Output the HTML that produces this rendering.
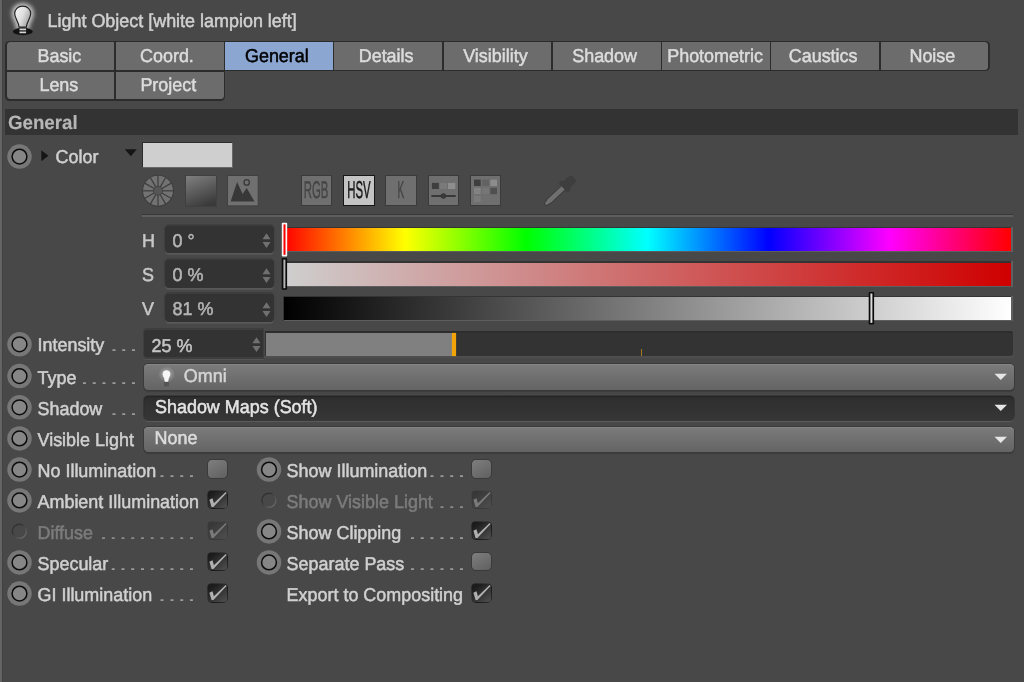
<!DOCTYPE html>
<html><head><meta charset="utf-8"><title>Light Object</title>
<style>
html,body{margin:0;padding:0;}
body{width:1024px;height:682px;overflow:hidden;background:#484848;position:relative;font-family:"Liberation Sans",sans-serif;color:#d0d0d0;text-rendering:geometricPrecision;}
.t{position:absolute;white-space:pre;-webkit-text-stroke:0.5px currentColor;}
.abs{position:absolute;}
.edge{left:0;top:0;width:1.8px;height:682px;background:#646464;box-shadow:0.9px 0 0 #424242;}
.hdr{left:5px;top:109px;width:1012.6px;height:26px;background:#333;}
.b{font-weight:bold;}
.radio{position:absolute;width:24.5px;height:24.5px;border-radius:50%;background:#777;}
.radio i{position:absolute;left:4.15px;top:4.15px;width:16.2px;height:16.2px;box-sizing:border-box;border:1.5px solid #0e0e0e;border-radius:50%;background:#868686;}
.radio.dis{background:none;}
.radio.dis i{left:4.1px;top:5.9px;width:14.8px;height:14.8px;border:1.3px solid;border-color:#343434 #505050 #5a5a5a #3a3a3a;background:#484848;}
.field{position:absolute;background:#333;border-radius:4px;box-shadow:0 -1.5px 0 0.2px #3c3c3c, 0 1.6px 0 0.2px #585858, -1.4px 0 0 #404040, 1.4px 0 0 #444;}
.dd{position:absolute;left:143.5px;width:870px;height:25px;border-radius:4.5px;background:linear-gradient(#7b7b7b,#646464);box-shadow:0 0 0 1px #3a3a3a, 0 2px 1px #3c3c3c, inset 0 1px 0 #858585;}
.dd.dark{background:linear-gradient(#2e2e2e,#363636);box-shadow:0 0 0 1px #383838, 0 1.8px 0 0.3px #5a5a5a, inset 0 1px 1px #242424;}
.cb{position:absolute;width:20.3px;height:19.8px;box-sizing:border-box;border-radius:5px;border:1px solid #3a3a3a;background:linear-gradient(150deg,#7e7e7e,#606060);}
.cb.on{border-color:rgba(30,30,30,.35);background:linear-gradient(140deg,#1c1c1c 18%,#4c4c4c 92%);}
.cb.don{border-color:rgba(60,60,60,.3);background:linear-gradient(140deg,#383838 18%,#4c4c4c 90%);}
.dim{color:#7c7c7c;}
</style></head><body>
<div class="abs edge"></div>

<svg class="abs" style="left:0;top:0" width="48" height="40" viewBox="0 0 48 40">
<defs><filter id="bl" x="-50%" y="-50%" width="200%" height="200%"><feGaussianBlur stdDeviation="2"/></filter>
<linearGradient id="bulbg" x1="0" y1="0.2" x2="1" y2="0.7"><stop offset="0" stop-color="#f6f6f6"/><stop offset="0.5" stop-color="#dedede"/><stop offset="1" stop-color="#9c9c9c"/></linearGradient></defs>
<path d="M22.65 6.2C17.8 6.2 14.7 9.6 14.7 13.6c0 2.6 1 4.4 2 6.4 1.2 2.3 2.1 4.2 2.3 7h7.4c.2-2.8 1.1-4.7 2.3-7 1-2 2-3.8 2-6.4 0-4-3.100-7.400-8.050-7.400z" fill="#fff" stroke="#fff" stroke-width="6" filter="url(#bl)" opacity="0.72"/>
<ellipse cx="22.8" cy="31.5" rx="10" ry="3.7" fill="#131313"/>
<path d="M22.65 6.2C17.8 6.2 14.7 9.6 14.7 13.6c0 2.6 1 4.4 2 6.4 1.2 2.3 2.1 4.2 2.3 7h7.4c.2-2.8 1.1-4.7 2.3-7 1-2 2-3.8 2-6.4 0-4-3.100-7.400-8.050-7.400z" fill="url(#bulbg)" stroke="#222" stroke-width="1.2"/>
<rect x="19" y="27.2" width="7.6" height="6.5" fill="#2a2a2a"/>
<rect x="19.6" y="28.6" width="6.4" height="1.6" fill="#d6d6d6"/><rect x="19.6" y="31.6" width="6.4" height="1.6" fill="#d6d6d6"/>
</svg>
<div class="t " style="left:47.5px;top:9.00px;font-size:17.95px;line-height:24px;transform-origin:0 18.00px;transform:scaleY(1.03);">Light Object [white lampion left]</div>
<div class="abs" style="left:5.0px;top:40.6px;width:984.8px;height:30.5px;background:#2c2c2c;border-radius:4.5px 4.5px 4.5px 0"></div>
<div class="abs" style="left:5.0px;top:64px;width:220.0px;height:36.9px;background:#2c2c2c;border-radius:0 0 4.5px 4.5px"></div>
<div class="abs" style="left:6.50px;top:42.0px;width:107.75px;height:27.6px;background:#6c6c6c;border-radius:3.5px 0 0 0;"></div><div class="t " style="left:5.5px;top:44.00px;font-size:17.95px;line-height:24px;transform-origin:0 18.00px;transform:scaleY(1.03);width:107.75px;text-align:center;color:#dcdcdc;">Basic</div>
<div class="abs" style="left:115.75px;top:42.0px;width:107.75px;height:27.6px;background:#6c6c6c;"></div><div class="t " style="left:113.05px;top:44.00px;font-size:17.95px;line-height:24px;transform-origin:0 18.00px;transform:scaleY(1.03);width:107.75px;text-align:center;color:#dcdcdc;">Coord.</div>
<div class="abs" style="left:225.00px;top:42.0px;width:107.75px;height:27.6px;background:#8ba6d1;"></div><div class="t " style="left:223.0px;top:44.00px;font-size:17.95px;line-height:24px;transform-origin:0 18.00px;transform:scaleY(1.03);width:107.75px;text-align:center;color:#000;">General</div>
<div class="abs" style="left:334.25px;top:42.0px;width:107.75px;height:27.6px;background:#6c6c6c;"></div><div class="t " style="left:332.25px;top:44.00px;font-size:17.95px;line-height:24px;transform-origin:0 18.00px;transform:scaleY(1.03);width:107.75px;text-align:center;color:#dcdcdc;">Details</div>
<div class="abs" style="left:443.50px;top:42.0px;width:107.75px;height:27.6px;background:#6c6c6c;"></div><div class="t " style="left:441.5px;top:44.00px;font-size:17.95px;line-height:24px;transform-origin:0 18.00px;transform:scaleY(1.03);width:107.75px;text-align:center;color:#dcdcdc;">Visibility</div>
<div class="abs" style="left:552.75px;top:42.0px;width:107.75px;height:27.6px;background:#6c6c6c;"></div><div class="t " style="left:550.75px;top:44.00px;font-size:17.95px;line-height:24px;transform-origin:0 18.00px;transform:scaleY(1.03);width:107.75px;text-align:center;color:#dcdcdc;">Shadow</div>
<div class="abs" style="left:662.00px;top:42.0px;width:107.75px;height:27.6px;background:#6c6c6c;"></div><div class="t " style="left:661.2px;top:44.00px;font-size:17.95px;line-height:24px;transform-origin:0 18.00px;transform:scaleY(1.03);width:107.75px;text-align:center;color:#dcdcdc;">Photometric</div>
<div class="abs" style="left:771.25px;top:42.0px;width:107.75px;height:27.6px;background:#6c6c6c;"></div><div class="t " style="left:769.25px;top:44.00px;font-size:17.95px;line-height:24px;transform-origin:0 18.00px;transform:scaleY(1.03);width:107.75px;text-align:center;color:#dcdcdc;">Caustics</div>
<div class="abs" style="left:880.50px;top:42.0px;width:107.75px;height:27.6px;background:#6c6c6c;border-radius:0 3.5px 3.5px 0;"></div><div class="t " style="left:878.5px;top:44.00px;font-size:17.95px;line-height:24px;transform-origin:0 18.00px;transform:scaleY(1.03);width:107.75px;text-align:center;color:#dcdcdc;">Noise</div>
<div class="abs" style="left:6.50px;top:71.5px;width:107.75px;height:27.6px;background:#6c6c6c;border-radius:0 0 0 3.5px;"></div><div class="t " style="left:5.0px;top:73.00px;font-size:17.95px;line-height:24px;transform-origin:0 18.00px;transform:scaleY(1.03);width:107.75px;text-align:center;color:#dcdcdc;">Lens</div>
<div class="abs" style="left:115.75px;top:71.5px;width:107.75px;height:27.6px;background:#6c6c6c;border-radius:0 0 3.5px 0;"></div><div class="t " style="left:114.45px;top:73.00px;font-size:17.95px;line-height:24px;transform-origin:0 18.00px;transform:scaleY(1.03);width:107.75px;text-align:center;color:#dcdcdc;">Project</div>
<div class="abs hdr"></div>
<div class="t b" style="left:8px;top:110.50px;font-size:18.7px;line-height:24px;transform-origin:0 18.50px;transform:scaleY(1.03);color:#b6b6b6;-webkit-text-stroke:0.15px currentColor;">General</div>
<svg class="abs" style="left:5px;top:142px" width="28" height="28" viewBox="0 0 28 28"><circle cx="14.50" cy="14.60" r="12.25" fill="#777"/><circle cx="14.50" cy="14.60" r="7.4" fill="#868686" stroke="#0c0c0c" stroke-width="1.5"/></svg>
<svg class="abs" style="left:41px;top:150px" width="8" height="12"><path d="M0.3 0.3L7.5 5.8L0.3 11.3z" fill="#151515"/></svg>
<div class="t " style="left:55.5px;top:145.00px;font-size:17.95px;line-height:24px;transform-origin:0 18.00px;transform:scaleY(1.03);">Color</div>
<svg class="abs" style="left:124px;top:148px" width="14" height="10"><path d="M0.8 1.2H12.8L6.8 8.2z" fill="#151515"/></svg>
<div class="abs" style="left:142.2px;top:142px;width:90.4px;height:25.5px;box-sizing:border-box;border:1.3px solid;border-color:#2c2c2c #686868 #686868 #2c2c2c;background:#cfcfcf"></div>
<svg class="abs" style="left:141px;top:174px" width="34" height="34" viewBox="0 0 34 34"><circle cx="17" cy="16.8" r="15.5" fill="#727272" stroke="#3e3e3e" stroke-width="1.1"/><line x1="21.00" y1="16.80" x2="32.40" y2="16.80" stroke="#3e3e3e" stroke-width="1.25"/><line x1="20.46" y1="18.80" x2="30.34" y2="24.50" stroke="#3e3e3e" stroke-width="1.25"/><line x1="19.00" y1="20.26" x2="24.70" y2="30.14" stroke="#3e3e3e" stroke-width="1.25"/><line x1="17.00" y1="20.80" x2="17.00" y2="32.20" stroke="#3e3e3e" stroke-width="1.25"/><line x1="15.00" y1="20.26" x2="9.30" y2="30.14" stroke="#3e3e3e" stroke-width="1.25"/><line x1="13.54" y1="18.80" x2="3.66" y2="24.50" stroke="#3e3e3e" stroke-width="1.25"/><line x1="13.00" y1="16.80" x2="1.60" y2="16.80" stroke="#3e3e3e" stroke-width="1.25"/><line x1="13.54" y1="14.80" x2="3.66" y2="9.10" stroke="#3e3e3e" stroke-width="1.25"/><line x1="15.00" y1="13.34" x2="9.30" y2="3.46" stroke="#3e3e3e" stroke-width="1.25"/><line x1="17.00" y1="12.80" x2="17.00" y2="1.40" stroke="#3e3e3e" stroke-width="1.25"/><line x1="19.00" y1="13.34" x2="24.70" y2="3.46" stroke="#3e3e3e" stroke-width="1.25"/><line x1="20.46" y1="14.80" x2="30.34" y2="9.10" stroke="#3e3e3e" stroke-width="1.25"/><circle cx="17" cy="16.8" r="4.5" fill="#565656" stroke="#424242" stroke-width="0.9"/></svg>
<div class="abs" style="left:184.6px;top:175px;width:32px;height:31.6px;box-sizing:border-box;border:1px solid #404040;background:linear-gradient(158deg,#7c7c7c 5%,#3a3a3a 90%)"></div>
<svg class="abs" style="left:227.3px;top:175.3px" width="32" height="32" viewBox="0 0 32 32"><rect x="0.5" y="0.5" width="30.7" height="30.4" fill="#707070" stroke="#404040"/>
<path d="M3.6 26.5L10.1 7L15.6 18.9L19.7 12.9L27.5 26.5z" fill="#383838"/><circle cx="19.7" cy="7.4" r="2.7" fill="none" stroke="#383838" stroke-width="1.3"/></svg>
<div class="abs" style="left:300.9px;top:175.3px;width:30.8px;height:31px;box-sizing:border-box;background:#6f6f6f;border:1px solid #3a3a3a;"></div><div class="t" style="left:266.4px;top:176.41px;width:100px;text-align:center;font-size:24.2px;line-height:30px;color:#464646;transform:scaleX(0.47);transform-origin:50% 50%">RGB</div>
<div class="abs" style="left:342.9px;top:175.1px;width:31.7px;height:31.4px;box-sizing:border-box;background:#c4c4c4;border:1.4px solid #161616;"></div><div class="t" style="left:308.9px;top:176.41px;width:100px;text-align:center;font-size:24.2px;line-height:30px;color:#181818;transform:scaleX(0.47);transform-origin:50% 50%">HSV</div>
<div class="abs" style="left:385.4px;top:175.3px;width:31.2px;height:31px;box-sizing:border-box;background:#6f6f6f;border:1px solid #3a3a3a;"></div><div class="t" style="left:351.3px;top:176.41px;width:100px;text-align:center;font-size:24.2px;line-height:30px;color:#464646;transform:scaleX(0.42);transform-origin:50% 50%">K</div>
<div class="abs" style="left:428px;top:175.3px;width:30.9px;height:31px;box-sizing:border-box;background:#6f6f6f;border:1px solid #3a3a3a;"></div><svg class="abs" style="left:428px;top:175px" width="31" height="32"><rect x="3.9" y="7.9" width="6.9" height="6.1" fill="#3e3e3e"/><rect x="12" y="7.9" width="7" height="6.1" fill="#7a7a7a"/><rect x="20" y="7.9" width="7.3" height="6.1" fill="#8e8e8e"/><rect x="3.4" y="20" width="24.3" height="2" fill="#383838"/><circle cx="15.4" cy="21" r="2.8" fill="#383838"/></svg>
<div class="abs" style="left:470.2px;top:175.3px;width:31.2px;height:31px;box-sizing:border-box;background:#6f6f6f;border:1px solid #3a3a3a;"></div><svg class="abs" style="left:470.4px;top:175px" width="31" height="32"><rect x="4" y="4.6" width="6.7" height="6.4" fill="#3e3e3e"/><rect x="12.3" y="4.6" width="6.7" height="6.4" fill="#626262"/><rect x="20.3" y="4.6" width="6.7" height="6.4" fill="#8c8c8c"/><rect x="4" y="12.8" width="6.7" height="6.4" fill="#828282"/><rect x="12.3" y="12.8" width="6.7" height="6.4" fill="#767676"/><rect x="20.3" y="12.8" width="6.7" height="6.4" fill="#505050"/><rect x="4" y="20.8" width="6.7" height="6.4" fill="#7a7a7a"/></svg>
<svg class="abs" style="left:530px;top:168px" width="64" height="44" viewBox="530 168 64 44"><g transform="translate(545.2 204.7) rotate(47)">
<rect x="-4.5" y="-39.6" width="9" height="13" rx="3.8" fill="#3e3e3e"/><rect x="-6.6" y="-29.5" width="13.2" height="5.2" rx="2" fill="#3e3e3e"/>
<path d="M-2.8 -25h5.6v19.5l-1.3 5.5h-3l-1.3 -5.5z" fill="#707070" stroke="#3e3e3e" stroke-width="1"/></g></svg>
<div class="abs" style="left:142px;top:213.8px;width:870.7px;height:1.4px;background:#383838"></div>
<div class="abs" style="left:142px;top:215.2px;width:870.7px;height:1.8px;background:#5e5e5e"></div>
<div class="t " style="left:142px;top:229.00px;font-size:17.95px;line-height:24px;transform-origin:0 18.00px;transform:scaleY(1.03);color:#c8c8c8">H</div>
<div class="field" style="left:165px;top:225.5px;width:109px;height:27.9px"></div>
<div class="t " style="left:172.5px;top:229.00px;font-size:17.95px;line-height:24px;transform-origin:0 18.00px;transform:scaleY(1.03);color:#b4b4b4">0 °</div>
<svg class="abs" style="left:262.3px;top:233.2px" width="9" height="16"><path d="M0.5 6.3L4.5 0.3L8.5 6.3z" fill="#707070"/><path d="M0.5 9L4.5 15L8.5 9z" fill="#707070"/></svg>
<div class="t " style="left:142px;top:263.00px;font-size:17.95px;line-height:24px;transform-origin:0 18.00px;transform:scaleY(1.03);color:#c8c8c8">S</div>
<div class="field" style="left:165px;top:259.8px;width:109px;height:27.9px"></div>
<div class="t " style="left:172.5px;top:263.00px;font-size:17.95px;line-height:24px;transform-origin:0 18.00px;transform:scaleY(1.03);color:#b4b4b4">0 %</div>
<svg class="abs" style="left:262.3px;top:267.5px" width="9" height="16"><path d="M0.5 6.3L4.5 0.3L8.5 6.3z" fill="#707070"/><path d="M0.5 9L4.5 15L8.5 9z" fill="#707070"/></svg>
<div class="t " style="left:142px;top:297.00px;font-size:17.95px;line-height:24px;transform-origin:0 18.00px;transform:scaleY(1.03);color:#c8c8c8">V</div>
<div class="field" style="left:165px;top:294.1px;width:109px;height:27.9px"></div>
<div class="t " style="left:172.5px;top:297.00px;font-size:17.95px;line-height:24px;transform-origin:0 18.00px;transform:scaleY(1.03);color:#b4b4b4">81 %</div>
<svg class="abs" style="left:262.3px;top:301.8px" width="9" height="16"><path d="M0.5 6.3L4.5 0.3L8.5 6.3z" fill="#707070"/><path d="M0.5 9L4.5 15L8.5 9z" fill="#707070"/></svg>
<div class="abs" style="left:282.6px;top:226.7px;width:730.1px;height:25.8px;background:linear-gradient(135deg,#343434 50%,#606060 50%)"></div><div class="abs" style="left:282.6px;top:226.7px;width:728.6px;height:1.4px;background:#343434"></div><div class="abs" style="left:284px;top:251.1px;width:728.7px;height:1.4px;background:#5e5e5e"></div><div class="abs" style="left:284px;top:228.1px;width:727.2px;height:23px;background:linear-gradient(90deg,#f00 0%,#ff0 16.66%,#0f0 33.33%,#0ff 50%,#00f 66.66%,#f0f 83.33%,#f00 100%)"></div>
<div class="abs" style="left:282.6px;top:261.3px;width:730.1px;height:25.8px;background:linear-gradient(135deg,#343434 50%,#606060 50%)"></div><div class="abs" style="left:282.6px;top:261.3px;width:728.6px;height:1.4px;background:#343434"></div><div class="abs" style="left:284px;top:285.7px;width:728.7px;height:1.4px;background:#5e5e5e"></div><div class="abs" style="left:284px;top:262.7px;width:727.2px;height:23px;background:linear-gradient(90deg,#cfcfcf,#cf0000)"></div>
<div class="abs" style="left:282.6px;top:295.6px;width:730.1px;height:25.8px;background:linear-gradient(135deg,#343434 50%,#606060 50%)"></div><div class="abs" style="left:282.6px;top:295.6px;width:728.6px;height:1.4px;background:#343434"></div><div class="abs" style="left:284px;top:320px;width:728.7px;height:1.4px;background:#5e5e5e"></div><div class="abs" style="left:284px;top:297px;width:727.2px;height:23px;background:linear-gradient(90deg,#000,#fff)"></div>
<svg class="abs" style="left:279px;top:220px" width="12" height="39" viewBox="279 220 12 39"><rect x="281.8" y="222.8" width="5.4" height="33.599999999999966" rx="1" fill="#f6f6f6"/><rect x="283.5" y="224.4" width="2.0000000000000004" height="30.399999999999967" fill="#f00"/></svg>
<svg class="abs" style="left:279px;top:256px" width="12" height="37" viewBox="279 256 12 37"><rect x="281.7" y="258" width="5.4" height="31.80000000000001" rx="1" fill="#0a0a0a"/><rect x="283.4" y="259.6" width="2.0000000000000004" height="28.600000000000012" fill="#b4b4b4"/></svg>
<svg class="abs" style="left:866px;top:289px" width="12" height="38" viewBox="866 289 12 38"><rect x="868.7" y="291.9" width="5.4" height="32.60000000000002" rx="1" fill="#0a0a0a"/><rect x="870.4000000000001" y="293.5" width="2.0000000000000004" height="29.400000000000023" fill="#dcdcdc"/></svg>
<svg class="abs" style="left:5px;top:330px" width="28" height="28" viewBox="0 0 28 28"><circle cx="14.50" cy="14.30" r="12.25" fill="#777"/><circle cx="14.50" cy="14.30" r="7.4" fill="#868686" stroke="#0c0c0c" stroke-width="1.5"/></svg>
<div class="t " style="left:37.5px;top:333.00px;font-size:17.95px;line-height:24px;transform-origin:0 18.00px;transform:scaleY(1.03);">Intensity</div>
<div class="abs" style="left:142.8px;top:328.4px;width:121.6px;height:30.6px;border-radius:4px 0 0 4px;background:#3e3e3e;box-shadow:0 1px 0 #545454"></div>
<div class="abs" style="left:264.4px;top:355px;width:749.6px;height:2.6px;background:#4e4e4e;border-radius:0 0 3.5px 0"></div>
<div class="abs" style="left:144.4px;top:330.4px;width:118.3px;height:26.9px;border-radius:3px 0 0 3px;background:#333"></div>
<div class="abs" style="left:264.6px;top:330.9px;width:748.2px;height:25.3px;border-radius:0 3px 3px 0;background:#333;box-shadow:inset 0 1.6px 0 #2c2c2c"></div>
<div class="abs" style="left:266px;top:332.8px;width:187px;height:23.1px;background:#808080"></div>
<div class="abs" style="left:452.4px;top:332.8px;width:3.4px;height:23.1px;background:#f5a30a;box-shadow:0 0 1px #f5a30a"></div>
<div class="abs" style="left:640.5px;top:349px;width:1.2px;height:7px;background:#a87820"></div>
<div class="t " style="left:151.5px;top:334.00px;font-size:17.95px;line-height:24px;transform-origin:0 18.00px;transform:scaleY(1.03);color:#c4c4c4">25 %</div>
<svg class="abs" style="left:252.2px;top:337.2px" width="9" height="16"><path d="M0.5 6.3L4.5 0.3L8.5 6.3z" fill="#707070"/><path d="M0.5 9L4.5 15L8.5 9z" fill="#707070"/></svg>
<svg class="abs" style="left:5px;top:362px" width="28" height="28" viewBox="0 0 28 28"><circle cx="14.50" cy="14.10" r="12.25" fill="#777"/><circle cx="14.50" cy="14.10" r="7.4" fill="#868686" stroke="#0c0c0c" stroke-width="1.5"/></svg>
<div class="t " style="left:37.5px;top:366.00px;font-size:17.95px;line-height:24px;transform-origin:0 18.00px;transform:scaleY(1.03);">Type</div>
<div class="dd" style="top:364px;height:25.6px"></div>
<svg class="abs" style="left:152px;top:362px" width="32" height="30" viewBox="152 362 32 30"><defs><radialGradient id="g2" cx="50%" cy="50%" r="50%"><stop offset="0.25" stop-color="#fff" stop-opacity="0.32"/><stop offset="0.75" stop-color="#fff" stop-opacity="0.12"/><stop offset="1" stop-color="#fff" stop-opacity="0"/></radialGradient><filter id="b2"><feGaussianBlur stdDeviation="0.45"/></filter></defs>
<ellipse cx="166.7" cy="374.3" rx="8.6" ry="8" fill="url(#g2)"/>
<g filter="url(#b2)"><rect x="164" y="381.6" width="5" height="4.8" fill="#555"/>
<path d="M166.5 370.2c-2.400 0-3.900 1.700-3.900 3.700 0 1.500.7 2.500 1.200 3.600.5 1 .8 2.300.9 4.300h3.600c.1-2 .4-3.300.9-4.300.5-1.100 1.200-2.100 1.200-3.600 0-2-1.500-3.700-3.900-3.700z" fill="#f6f6f6"/></g></svg>
<div class="t " style="left:183.8px;top:364.00px;font-size:17.95px;line-height:24px;transform-origin:0 18.00px;transform:scaleY(1.03);color:#d4d4d4">Omni</div>
<svg class="abs" style="left:994px;top:373px" width="14" height="8"><path d="M0.5 0.8H13L6.75 7z" fill="#e6e6e6"/></svg>
<svg class="abs" style="left:5px;top:393px" width="28" height="28" viewBox="0 0 28 28"><circle cx="14.50" cy="14.30" r="12.25" fill="#777"/><circle cx="14.50" cy="14.30" r="7.4" fill="#868686" stroke="#0c0c0c" stroke-width="1.5"/></svg>
<div class="t " style="left:37.5px;top:397.00px;font-size:17.95px;line-height:24px;transform-origin:0 18.00px;transform:scaleY(1.03);">Shadow</div>
<div class="dd dark" style="top:395.8px;height:24.2px"></div>
<div class="t " style="left:155px;top:395.00px;font-size:17.95px;line-height:24px;transform-origin:0 18.00px;transform:scaleY(1.03);color:#e4e4e4">Shadow Maps (Soft)</div>
<svg class="abs" style="left:994px;top:404px" width="14" height="8"><path d="M0.5 0.8H13L6.75 7z" fill="#e6e6e6"/></svg>
<svg class="abs" style="left:5px;top:424px" width="28" height="28" viewBox="0 0 28 28"><circle cx="14.50" cy="14.40" r="12.25" fill="#777"/><circle cx="14.50" cy="14.40" r="7.4" fill="#868686" stroke="#0c0c0c" stroke-width="1.5"/></svg>
<div class="t " style="left:37.5px;top:428.00px;font-size:17.95px;line-height:24px;transform-origin:0 18.00px;transform:scaleY(1.03);">Visible Light</div>
<div class="dd" style="top:427px;height:24.5px"></div>
<div class="t " style="left:154.6px;top:426.00px;font-size:17.95px;line-height:24px;transform-origin:0 18.00px;transform:scaleY(1.03);color:#dcdcdc">None</div>
<svg class="abs" style="left:994px;top:435.5px" width="14" height="8"><path d="M0.5 0.8H13L6.75 7z" fill="#e6e6e6"/></svg>
<div class="t" style="left:-61.099999999999994px;top:332.80px;width:200px;text-align:right;font-size:17.95px;line-height:24px;letter-spacing:0.77px;-webkit-text-stroke:0;color:#9c9c9c;transform-origin:100% 18.00px;transform:scale(1.7,0.9)">...</div>
<div class="t" style="left:-61.099999999999994px;top:365.50px;width:200px;text-align:right;font-size:17.95px;line-height:24px;letter-spacing:0.77px;-webkit-text-stroke:0;color:#9c9c9c;transform-origin:100% 18.00px;transform:scale(1.7,0.9)">......</div>
<div class="t" style="left:-61.099999999999994px;top:396.50px;width:200px;text-align:right;font-size:17.95px;line-height:24px;letter-spacing:0.77px;-webkit-text-stroke:0;color:#9c9c9c;transform-origin:100% 18.00px;transform:scale(1.7,0.9)">...</div>
<svg class="abs" style="left:5px;top:455px" width="28" height="28" viewBox="0 0 28 28"><circle cx="14.50" cy="14.60" r="12.25" fill="#777"/><circle cx="14.50" cy="14.60" r="7.4" fill="#868686" stroke="#0c0c0c" stroke-width="1.5"/></svg>
<div class="t " style="left:37.5px;top:459.00px;font-size:17.95px;line-height:24px;transform-origin:0 18.00px;transform:scaleY(1.03);">No Illumination</div>
<div class="t" style="left:-2.5999999999999943px;top:458.50px;width:200px;text-align:right;font-size:17.95px;line-height:24px;letter-spacing:0.77px;-webkit-text-stroke:0;color:#9c9c9c;transform-origin:100% 18.00px;transform:scale(1.7,0.9)">....</div>
<div class="cb" style="left:207.4px;top:458.8px"></div>
<svg class="abs" style="left:5px;top:486px" width="28" height="28" viewBox="0 0 28 28"><circle cx="14.50" cy="14.40" r="12.25" fill="#777"/><circle cx="14.50" cy="14.40" r="7.4" fill="#868686" stroke="#0c0c0c" stroke-width="1.5"/></svg>
<div class="t " style="left:37.5px;top:490.00px;font-size:17.95px;line-height:24px;transform-origin:0 18.00px;transform:scaleY(1.03);">Ambient Illumination</div>
<div class="cb on" style="left:207.4px;top:489.6px"><svg class="abs" style="left:-1px;top:-1px;overflow:visible" width="21" height="20" viewBox="0 0 21 20"><path d="M2.4 9.8L5.5 8.3L6.9 13.2L18.7 1.9L19.6 2.9L6.4 17.1L4.6 17.1z" fill="#b0b0b0" style="filter:blur(0.35px)"/></svg></div>
<svg class="abs" style="left:5px;top:517px" width="28" height="28" viewBox="0 0 28 28"><defs><linearGradient id="dr1" x1="0" y1="0" x2="1" y2="1"><stop offset="0.3" stop-color="#323232"/><stop offset="0.85" stop-color="#666"/></linearGradient></defs><circle cx="14.40" cy="14.30" r="7" fill="none" stroke="url(#dr1)" stroke-width="1.4"/></svg>
<div class="t dim" style="left:37.5px;top:521.00px;font-size:17.95px;line-height:24px;transform-origin:0 18.00px;transform:scaleY(1.03);">Diffuse</div>
<div class="t" style="left:-2.5999999999999943px;top:520.50px;width:200px;text-align:right;font-size:17.95px;line-height:24px;letter-spacing:0.77px;-webkit-text-stroke:0;color:#8c8c8c;transform-origin:100% 18.00px;transform:scale(1.7,0.9)">..........</div>
<div class="cb don" style="left:207.4px;top:520.5999999999999px"><svg class="abs" style="left:-1px;top:-1px;overflow:visible" width="21" height="20" viewBox="0 0 21 20"><path d="M2.4 9.8L5.5 8.3L6.9 13.2L18.7 1.9L19.6 2.9L6.4 17.1L4.6 17.1z" fill="#7a7a7a" style="filter:blur(0.35px)"/></svg></div>
<svg class="abs" style="left:5px;top:548px" width="28" height="28" viewBox="0 0 28 28"><circle cx="14.50" cy="14.40" r="12.25" fill="#777"/><circle cx="14.50" cy="14.40" r="7.4" fill="#868686" stroke="#0c0c0c" stroke-width="1.5"/></svg>
<div class="t " style="left:37.5px;top:552.00px;font-size:17.95px;line-height:24px;transform-origin:0 18.00px;transform:scaleY(1.03);">Specular</div>
<div class="t" style="left:-2.5999999999999943px;top:551.50px;width:200px;text-align:right;font-size:17.95px;line-height:24px;letter-spacing:0.77px;-webkit-text-stroke:0;color:#9c9c9c;transform-origin:100% 18.00px;transform:scale(1.7,0.9)">.........</div>
<div class="cb on" style="left:207.4px;top:551.5999999999999px"><svg class="abs" style="left:-1px;top:-1px;overflow:visible" width="21" height="20" viewBox="0 0 21 20"><path d="M2.4 9.8L5.5 8.3L6.9 13.2L18.7 1.9L19.6 2.9L6.4 17.1L4.6 17.1z" fill="#b0b0b0" style="filter:blur(0.35px)"/></svg></div>
<svg class="abs" style="left:5px;top:579px" width="28" height="28" viewBox="0 0 28 28"><circle cx="14.50" cy="14.60" r="12.25" fill="#777"/><circle cx="14.50" cy="14.60" r="7.4" fill="#868686" stroke="#0c0c0c" stroke-width="1.5"/></svg>
<div class="t " style="left:37.5px;top:583.00px;font-size:17.95px;line-height:24px;transform-origin:0 18.00px;transform:scaleY(1.03);">GI Illumination</div>
<div class="t" style="left:-2.5999999999999943px;top:582.50px;width:200px;text-align:right;font-size:17.95px;line-height:24px;letter-spacing:0.77px;-webkit-text-stroke:0;color:#9c9c9c;transform-origin:100% 18.00px;transform:scale(1.7,0.9)">....</div>
<div class="cb on" style="left:207.4px;top:582.8px"><svg class="abs" style="left:-1px;top:-1px;overflow:visible" width="21" height="20" viewBox="0 0 21 20"><path d="M2.4 9.8L5.5 8.3L6.9 13.2L18.7 1.9L19.6 2.9L6.4 17.1L4.6 17.1z" fill="#b0b0b0" style="filter:blur(0.35px)"/></svg></div>
<svg class="abs" style="left:255px;top:455px" width="28" height="28" viewBox="0 0 28 28"><circle cx="14.00" cy="14.60" r="12.25" fill="#777"/><circle cx="14.00" cy="14.60" r="7.4" fill="#868686" stroke="#0c0c0c" stroke-width="1.5"/></svg>
<div class="t " style="left:286.6px;top:459.00px;font-size:17.95px;line-height:24px;transform-origin:0 18.00px;transform:scaleY(1.03);">Show Illumination</div>
<div class="t" style="left:266.59999999999997px;top:458.50px;width:200px;text-align:right;font-size:17.95px;line-height:24px;letter-spacing:0.77px;-webkit-text-stroke:0;color:#9c9c9c;transform-origin:100% 18.00px;transform:scale(1.7,0.9)">....</div>
<div class="cb" style="left:471.4px;top:458.8px"></div>
<svg class="abs" style="left:254px;top:486px" width="28" height="28" viewBox="0 0 28 28"><defs><linearGradient id="dr2" x1="0" y1="0" x2="1" y2="1"><stop offset="0.3" stop-color="#323232"/><stop offset="0.85" stop-color="#666"/></linearGradient></defs><circle cx="14.90" cy="14.30" r="7" fill="none" stroke="url(#dr2)" stroke-width="1.4"/></svg>
<div class="t dim" style="left:286.6px;top:490.00px;font-size:17.95px;line-height:24px;transform-origin:0 18.00px;transform:scaleY(1.03);">Show Visible Light</div>
<div class="t" style="left:266.59999999999997px;top:489.50px;width:200px;text-align:right;font-size:17.95px;line-height:24px;letter-spacing:0.77px;-webkit-text-stroke:0;color:#8c8c8c;transform-origin:100% 18.00px;transform:scale(1.7,0.9)">...</div>
<div class="cb don" style="left:471.4px;top:489.6px"><svg class="abs" style="left:-1px;top:-1px;overflow:visible" width="21" height="20" viewBox="0 0 21 20"><path d="M2.4 9.8L5.5 8.3L6.9 13.2L18.7 1.9L19.6 2.9L6.4 17.1L4.6 17.1z" fill="#7a7a7a" style="filter:blur(0.35px)"/></svg></div>
<svg class="abs" style="left:255px;top:517px" width="28" height="28" viewBox="0 0 28 28"><circle cx="14.00" cy="14.40" r="12.25" fill="#777"/><circle cx="14.00" cy="14.40" r="7.4" fill="#868686" stroke="#0c0c0c" stroke-width="1.5"/></svg>
<div class="t " style="left:286.6px;top:521.00px;font-size:17.95px;line-height:24px;transform-origin:0 18.00px;transform:scaleY(1.03);">Show Clipping</div>
<div class="t" style="left:266.59999999999997px;top:520.50px;width:200px;text-align:right;font-size:17.95px;line-height:24px;letter-spacing:0.77px;-webkit-text-stroke:0;color:#9c9c9c;transform-origin:100% 18.00px;transform:scale(1.7,0.9)">......</div>
<div class="cb on" style="left:471.4px;top:520.5999999999999px"><svg class="abs" style="left:-1px;top:-1px;overflow:visible" width="21" height="20" viewBox="0 0 21 20"><path d="M2.4 9.8L5.5 8.3L6.9 13.2L18.7 1.9L19.6 2.9L6.4 17.1L4.6 17.1z" fill="#b0b0b0" style="filter:blur(0.35px)"/></svg></div>
<svg class="abs" style="left:255px;top:548px" width="28" height="28" viewBox="0 0 28 28"><circle cx="14.00" cy="14.40" r="12.25" fill="#777"/><circle cx="14.00" cy="14.40" r="7.4" fill="#868686" stroke="#0c0c0c" stroke-width="1.5"/></svg>
<div class="t " style="left:286.6px;top:552.00px;font-size:17.95px;line-height:24px;transform-origin:0 18.00px;transform:scaleY(1.03);">Separate Pass</div>
<div class="t" style="left:266.59999999999997px;top:551.50px;width:200px;text-align:right;font-size:17.95px;line-height:24px;letter-spacing:0.77px;-webkit-text-stroke:0;color:#9c9c9c;transform-origin:100% 18.00px;transform:scale(1.7,0.9)">......</div>
<div class="cb" style="left:471.4px;top:551.5999999999999px"></div>
<div class="t " style="left:286.6px;top:583.00px;font-size:17.95px;line-height:24px;transform-origin:0 18.00px;transform:scaleY(1.03);">Export to Compositing</div>
<div class="cb on" style="left:471.4px;top:582.8px"><svg class="abs" style="left:-1px;top:-1px;overflow:visible" width="21" height="20" viewBox="0 0 21 20"><path d="M2.4 9.8L5.5 8.3L6.9 13.2L18.7 1.9L19.6 2.9L6.4 17.1L4.6 17.1z" fill="#b0b0b0" style="filter:blur(0.35px)"/></svg></div>
</body></html>
